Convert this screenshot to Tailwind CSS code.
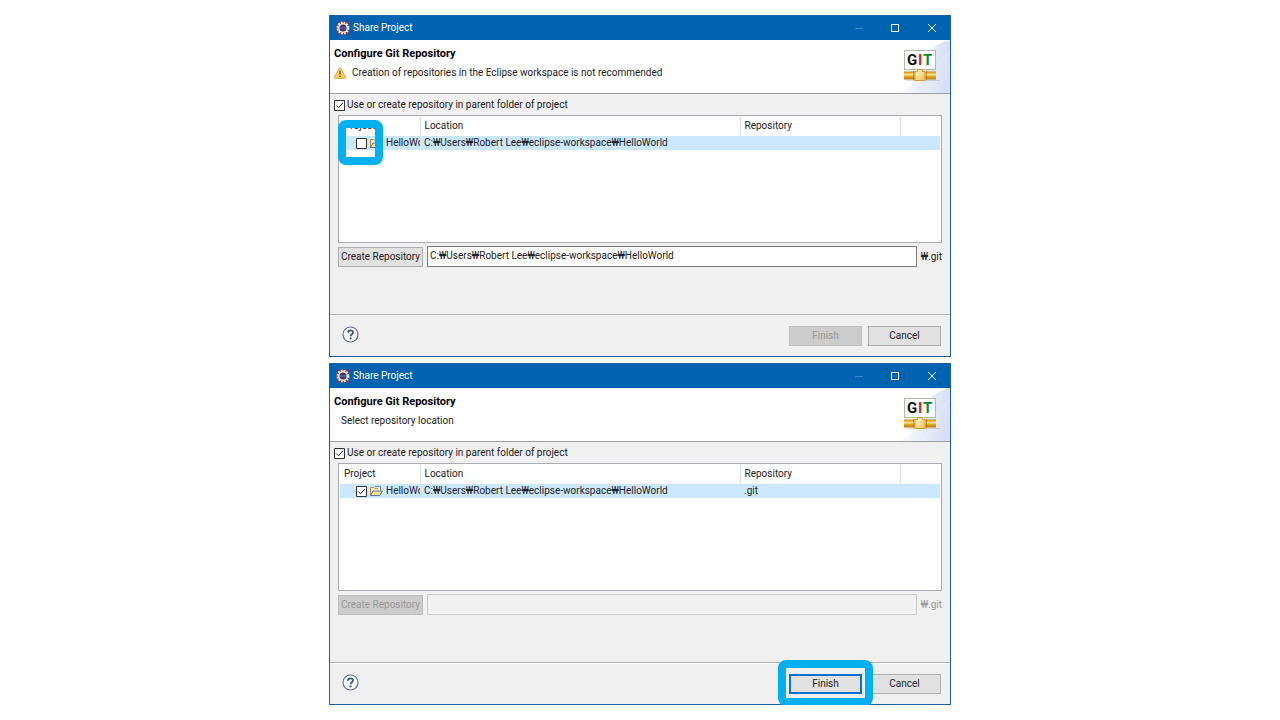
<!DOCTYPE html>
<html lang="en">
  <head>
    <meta charset="UTF-8" />
    <meta name="viewport" content="width=device-width, initial-scale=1.0" />
    <title>Share Project</title>
    <script src="https://cdn.jsdelivr.net/npm/@tailwindcss/browser@4"></script>
  </head>
  <body class="bg-white text-[#222] text-[10px] leading-[14px] font-[Roboto,'Noto_Sans_CJK_KR',sans-serif]">
    <!-- Shared icons -->
    <svg class="absolute size-0">
      <defs>
        <linearGradient id="swoosh" x1="0" y1="0.3" x2="1" y2="0.6">
          <stop offset="0" stop-color="#fff" />
          <stop offset=".4" stop-color="#f1f4fc" />
          <stop offset="1" stop-color="#ccd7f1" />
        </linearGradient>
        <linearGradient id="pipe" x1="0" y1="0" x2="0" y2="1">
          <stop offset="0" stop-color="#c58a12" />
          <stop offset=".2" stop-color="#e9ae2c" />
          <stop offset=".4" stop-color="#ffe9a0" />
          <stop offset=".6" stop-color="#e5a524" />
          <stop offset="1" stop-color="#b97a0a" />
        </linearGradient>
        <linearGradient id="node" x1="0" y1="0" x2="1" y2="1">
          <stop offset="0" stop-color="#fffbe6" />
          <stop offset="1" stop-color="#f2bd48" />
        </linearGradient>
      </defs>
      <symbol id="gear" viewBox="0 0 14 14">
        <rect x=".5" y=".5" width="13" height="13" rx="1.500" fill="#6e3f5c" />
        <circle cx="7" cy="7" r="5.500" fill="none" stroke="#fff" stroke-width="1.800" stroke-dasharray="1.700 1.180" />
        <circle cx="7" cy="7" r="4.900" fill="#f1eff6" />
        <circle cx="7" cy="7" r="3.500" fill="#35325f" />
        <path d="M3.800 6.300h6.400M3.800 7.800h6.400" stroke="#8784b0" stroke-width=".6" />
      </symbol>
      <symbol id="git" viewBox="0 0 50 53">
        <path d="M50 0v53H0C12 49 14 39 20 26 26 12 34 4 50 0z" fill="url(#swoosh)" />
        <path d="M50 10C36 18 34 38 20 53h30z" fill="#fff" opacity=".2" />
        <rect x="4.500" y="10.500" width="31" height="19" fill="#fff" stroke="#b3b8a8" />
        <path d="M6 40.500h34" stroke="#8793b5" opacity=".3" />
        <rect x="4" y="31.500" width="32" height="8" fill="url(#pipe)" />
        <path d="M13.500 31v9M26.500 31v9" stroke="#a86f0c" opacity=".6" />
        <path d="M17.500 29.500h5v2h2.500v9h-10v-9h2.500z" fill="url(#node)" stroke="#d39c34" />
      </symbol>
      <symbol id="folder" viewBox="0 0 14 12">
        <path d="M1.500 10.500v-8h3.500l1 1.200h5.500v2" fill="#fff3cf" stroke="#b98a3c" />
        <path d="M6 1.500h5.500v3.500" fill="#dce9fa" stroke="#6d91c9" />
        <path d="M1.500 10.500l2.500-4.500h9.300l-2.500 4.500z" fill="#fde08c" stroke="#54789f" />
      </symbol>
      <symbol id="help" viewBox="0 0 17 17">
        <circle cx="8.500" cy="8.500" r="7.500" fill="#f8f9fc" stroke="#66718f" stroke-width="1.200" />
        <path d="M6 6.800C6 5 7.100 4.300 8.500 4.300S11 5.100 11 6.500c0 1.700-2.400 1.800-2.400 3.700" fill="none" stroke="#45527a" stroke-width="1.800" />
        <circle cx="8.600" cy="12.300" r="1.100" fill="#45527a" />
      </symbol>
      <symbol id="warning" viewBox="0 0 12 12">
        <path d="M5.200 1.300q.8-1.100 1.600 0L11.300 9.800q.3 1.500-.8 1.500h-9q-1.100 0-.8-1.500z" fill="#fbd36b" stroke="#dd9f35" />
        <path d="M6 3.800v3.700M6 8.600v1.400" stroke="#6b4a10" stroke-width="1.300" />
      </symbol>
    </svg>

    <main class="mx-auto flex w-full max-w-[622px] flex-col gap-1.5 pt-[15px]">
      <!-- Dialog 1: parent folder repository not created yet -->
      <section class="border border-[#1c5f9f] bg-[#f0f0f0]">
        <header class="flex h-6 items-center bg-[#0063b1] pb-px pl-1.5 text-white">
          <svg class="size-3.5"><use href="#gear" /></svg>
          <h1 class="ml-[3px] flex-1">Share Project</h1>
          <button aria-label="Minimize" class="flex w-9 justify-center"><svg class="size-2.5" viewBox="0 0 10 10"><path d="M1 5.500h8" stroke="#3c87c6" /></svg></button>
          <button aria-label="Maximize" class="flex w-9 justify-center"><svg class="size-2.5" viewBox="0 0 10 10"><path d="M1.500 1.500h7v7h-7z" fill="none" stroke="#fff" /></svg></button>
          <button aria-label="Close" class="flex w-[37px] justify-center"><svg class="size-2.5" viewBox="0 0 10 10"><path d="M1 1l8 8M9 1l-8 8" stroke="#fff" /></svg></button>
        </header>
        <div class="flex h-[54px] justify-between border-b border-[#a0a0a0] bg-white pl-1">
          <div class="pt-[7px]">
            <h2 class="text-[11px] font-bold text-black">Configure Git Repository</h2>
            <p class="mt-[5px] flex items-center gap-1.5"><svg class="size-3"><use href="#warning" /></svg>Creation of repositories in the Eclipse workspace is not recommended</p>
          </div>
          <svg class="h-[53px] w-[50px] text-[15px] font-bold">
            <use href="#git" />
            <text x="7" y="25" fill="#111">G</text>
            <text x="18" y="25" fill="#d8202a">I</text>
            <text x="23" y="25" fill="#16892b">T</text>
          </svg>
        </div>
        <div class="h-[221px] border-b border-[#b4b4b4] pt-1">
          <label class="flex items-center gap-0.5 pl-1">
            <input type="checkbox" checked class="sr-only" />
            <svg class="size-[11px] bg-white" viewBox="0 0 11 11"><path d="M.5.5h10v10H.5z" fill="none" stroke="#333" /><path d="M2.300 5.500l2.200 2.300 4.300-4.800" fill="none" stroke="#222" /></svg>
            Use or create repository in parent folder of project
          </label>
          <div class="relative mx-2 mt-[3px] h-32 border border-[#a9adb3] bg-white px-px">
            <table class="w-full table-fixed text-left">
              <thead>
                <tr class="h-5">
                  <th class="w-20 border-r border-[#e0e0e0] pl-1 font-normal">Project</th>
                  <th class="border-r border-[#e0e0e0] pl-1 font-normal">Location</th>
                  <th class="w-40 border-r border-[#e0e0e0] pl-1 font-normal">Repository</th>
                  <th class="w-10"></th>
                </tr>
              </thead>
              <tbody>
                <tr class="bg-[#cce8ff]">
                  <td class="overflow-hidden">
                    <label class="flex items-center pl-4 whitespace-nowrap">
                      <input type="checkbox" class="sr-only" />
                      <svg class="size-[11px] shrink-0 bg-white" viewBox="0 0 11 11"><path d="M.5.5h10v10H.5z" fill="none" stroke="#333" /></svg>
                      <svg class="mr-[3px] ml-0.5 h-3 w-3.5 shrink-0"><use href="#folder" /></svg>
                      <span class="min-w-0 flex-1 overflow-hidden">HelloWorld</span>
                    </label>
                  </td>
                  <td class="pl-1">C:₩Users₩Robert Lee₩eclipse-workspace₩HelloWorld</td>
                  <td class="pl-1"></td>
                  <td></td>
                </tr>
              </tbody>
            </table>
            <div class="absolute -left-px top-1 size-[45px] rounded-lg border-8 border-[#00b0f0]"></div>
          </div>
          <div class="mx-2 mt-[3px] flex items-center">
            <button class="h-5 w-[85px] border border-[#adadad] bg-[#e1e1e1]">Create Repository</button>
            <input id="path1" type="text" value="C:₩Users₩Robert Lee₩eclipse-workspace₩HelloWorld" class="ml-1 h-[21px] min-w-0 flex-1 border border-[#7a7a7a] bg-white px-0.5 pb-0.5" />
            <label for="path1" class="w-[25px] text-right">₩.git</label>
          </div>
        </div>
        <footer class="flex h-[41px] items-center gap-1.5 border-t border-white pr-[9px] pl-3">
          <button aria-label="Help" class="mr-auto pb-[3px]"><svg class="size-[17px]"><use href="#help" /></svg></button>
          <button disabled class="h-5 w-[73px] border border-[#bfbfbf] bg-[#cccccc] text-[#9a9a9a]">Finish</button>
          <button class="h-5 w-[73px] border border-[#adadad] bg-[#e1e1e1]">Cancel</button>
        </footer>
      </section>

      <!-- Dialog 2: repository created, ready to finish -->
      <section class="border border-[#1c5f9f] bg-[#f0f0f0]">
        <header class="flex h-6 items-center bg-[#0063b1] pb-px pl-1.5 text-white">
          <svg class="size-3.5"><use href="#gear" /></svg>
          <h1 class="ml-[3px] flex-1">Share Project</h1>
          <button aria-label="Minimize" class="flex w-9 justify-center"><svg class="size-2.5" viewBox="0 0 10 10"><path d="M1 5.500h8" stroke="#3c87c6" /></svg></button>
          <button aria-label="Maximize" class="flex w-9 justify-center"><svg class="size-2.5" viewBox="0 0 10 10"><path d="M1.500 1.500h7v7h-7z" fill="none" stroke="#fff" /></svg></button>
          <button aria-label="Close" class="flex w-[37px] justify-center"><svg class="size-2.5" viewBox="0 0 10 10"><path d="M1 1l8 8M9 1l-8 8" stroke="#fff" /></svg></button>
        </header>
        <div class="flex h-[54px] justify-between border-b border-[#a0a0a0] bg-white pl-1">
          <div class="pt-[7px]">
            <h2 class="text-[11px] font-bold text-black">Configure Git Repository</h2>
            <p class="mt-[5px] pl-[7px]">Select repository location</p>
          </div>
          <svg class="h-[53px] w-[50px] text-[15px] font-bold">
            <use href="#git" />
            <text x="7" y="25" fill="#111">G</text>
            <text x="18" y="25" fill="#d8202a">I</text>
            <text x="23" y="25" fill="#16892b">T</text>
          </svg>
        </div>
        <div class="h-[221px] border-b border-[#b4b4b4] pt-1">
          <label class="flex items-center gap-0.5 pl-1">
            <input type="checkbox" checked class="sr-only" />
            <svg class="size-[11px] bg-white" viewBox="0 0 11 11"><path d="M.5.5h10v10H.5z" fill="none" stroke="#333" /><path d="M2.300 5.500l2.200 2.300 4.300-4.800" fill="none" stroke="#222" /></svg>
            Use or create repository in parent folder of project
          </label>
          <div class="mx-2 mt-[3px] h-32 border border-[#a9adb3] bg-white px-px">
            <table class="w-full table-fixed text-left">
              <thead>
                <tr class="h-5">
                  <th class="w-20 border-r border-[#e0e0e0] pl-1 font-normal">Project</th>
                  <th class="border-r border-[#e0e0e0] pl-1 font-normal">Location</th>
                  <th class="w-40 border-r border-[#e0e0e0] pl-1 font-normal">Repository</th>
                  <th class="w-10"></th>
                </tr>
              </thead>
              <tbody>
                <tr class="bg-[#cce8ff]">
                  <td class="overflow-hidden">
                    <label class="flex items-center pl-4 whitespace-nowrap">
                      <input type="checkbox" checked class="sr-only" />
                      <svg class="size-[11px] shrink-0 bg-white" viewBox="0 0 11 11"><path d="M.5.5h10v10H.5z" fill="none" stroke="#333" /><path d="M2.300 5.500l2.200 2.300 4.300-4.800" fill="none" stroke="#222" /></svg>
                      <svg class="mr-[3px] ml-0.5 h-3 w-3.5 shrink-0"><use href="#folder" /></svg>
                      <span class="min-w-0 flex-1 overflow-hidden">HelloWorld</span>
                    </label>
                  </td>
                  <td class="pl-1">C:₩Users₩Robert Lee₩eclipse-workspace₩HelloWorld</td>
                  <td class="pl-1">.git</td>
                  <td></td>
                </tr>
              </tbody>
            </table>
          </div>
          <div class="mx-2 mt-[3px] flex items-center">
            <button disabled class="h-5 w-[85px] border border-[#bfbfbf] bg-[#cccccc] text-[#9a9a9a]">Create Repository</button>
            <input id="path2" type="text" disabled class="ml-1 h-[21px] min-w-0 flex-1 border border-[#cccccc] bg-[#f0f0f0] px-0.5 pb-0.5" />
            <label for="path2" class="w-[25px] text-right text-[#9a9a9a]">₩.git</label>
          </div>
        </div>
        <footer class="flex h-[41px] items-center gap-1.5 border-t border-white pr-[9px] pl-3">
          <button aria-label="Help" class="mr-auto pb-[3px]"><svg class="size-[17px]"><use href="#help" /></svg></button>
          <div class="relative">
            <button class="h-5 w-[73px] border-2 border-[#0f6fd0] bg-[#e1e1e1]">Finish</button>
            <div class="absolute -inset-x-[11px] -top-3.5 -bottom-3 rounded-lg border-8 border-[#00b0f0]"></div>
          </div>
          <button class="h-5 w-[73px] border border-[#adadad] bg-[#e1e1e1]">Cancel</button>
        </footer>
      </section>
    </main>
  </body>
</html>
